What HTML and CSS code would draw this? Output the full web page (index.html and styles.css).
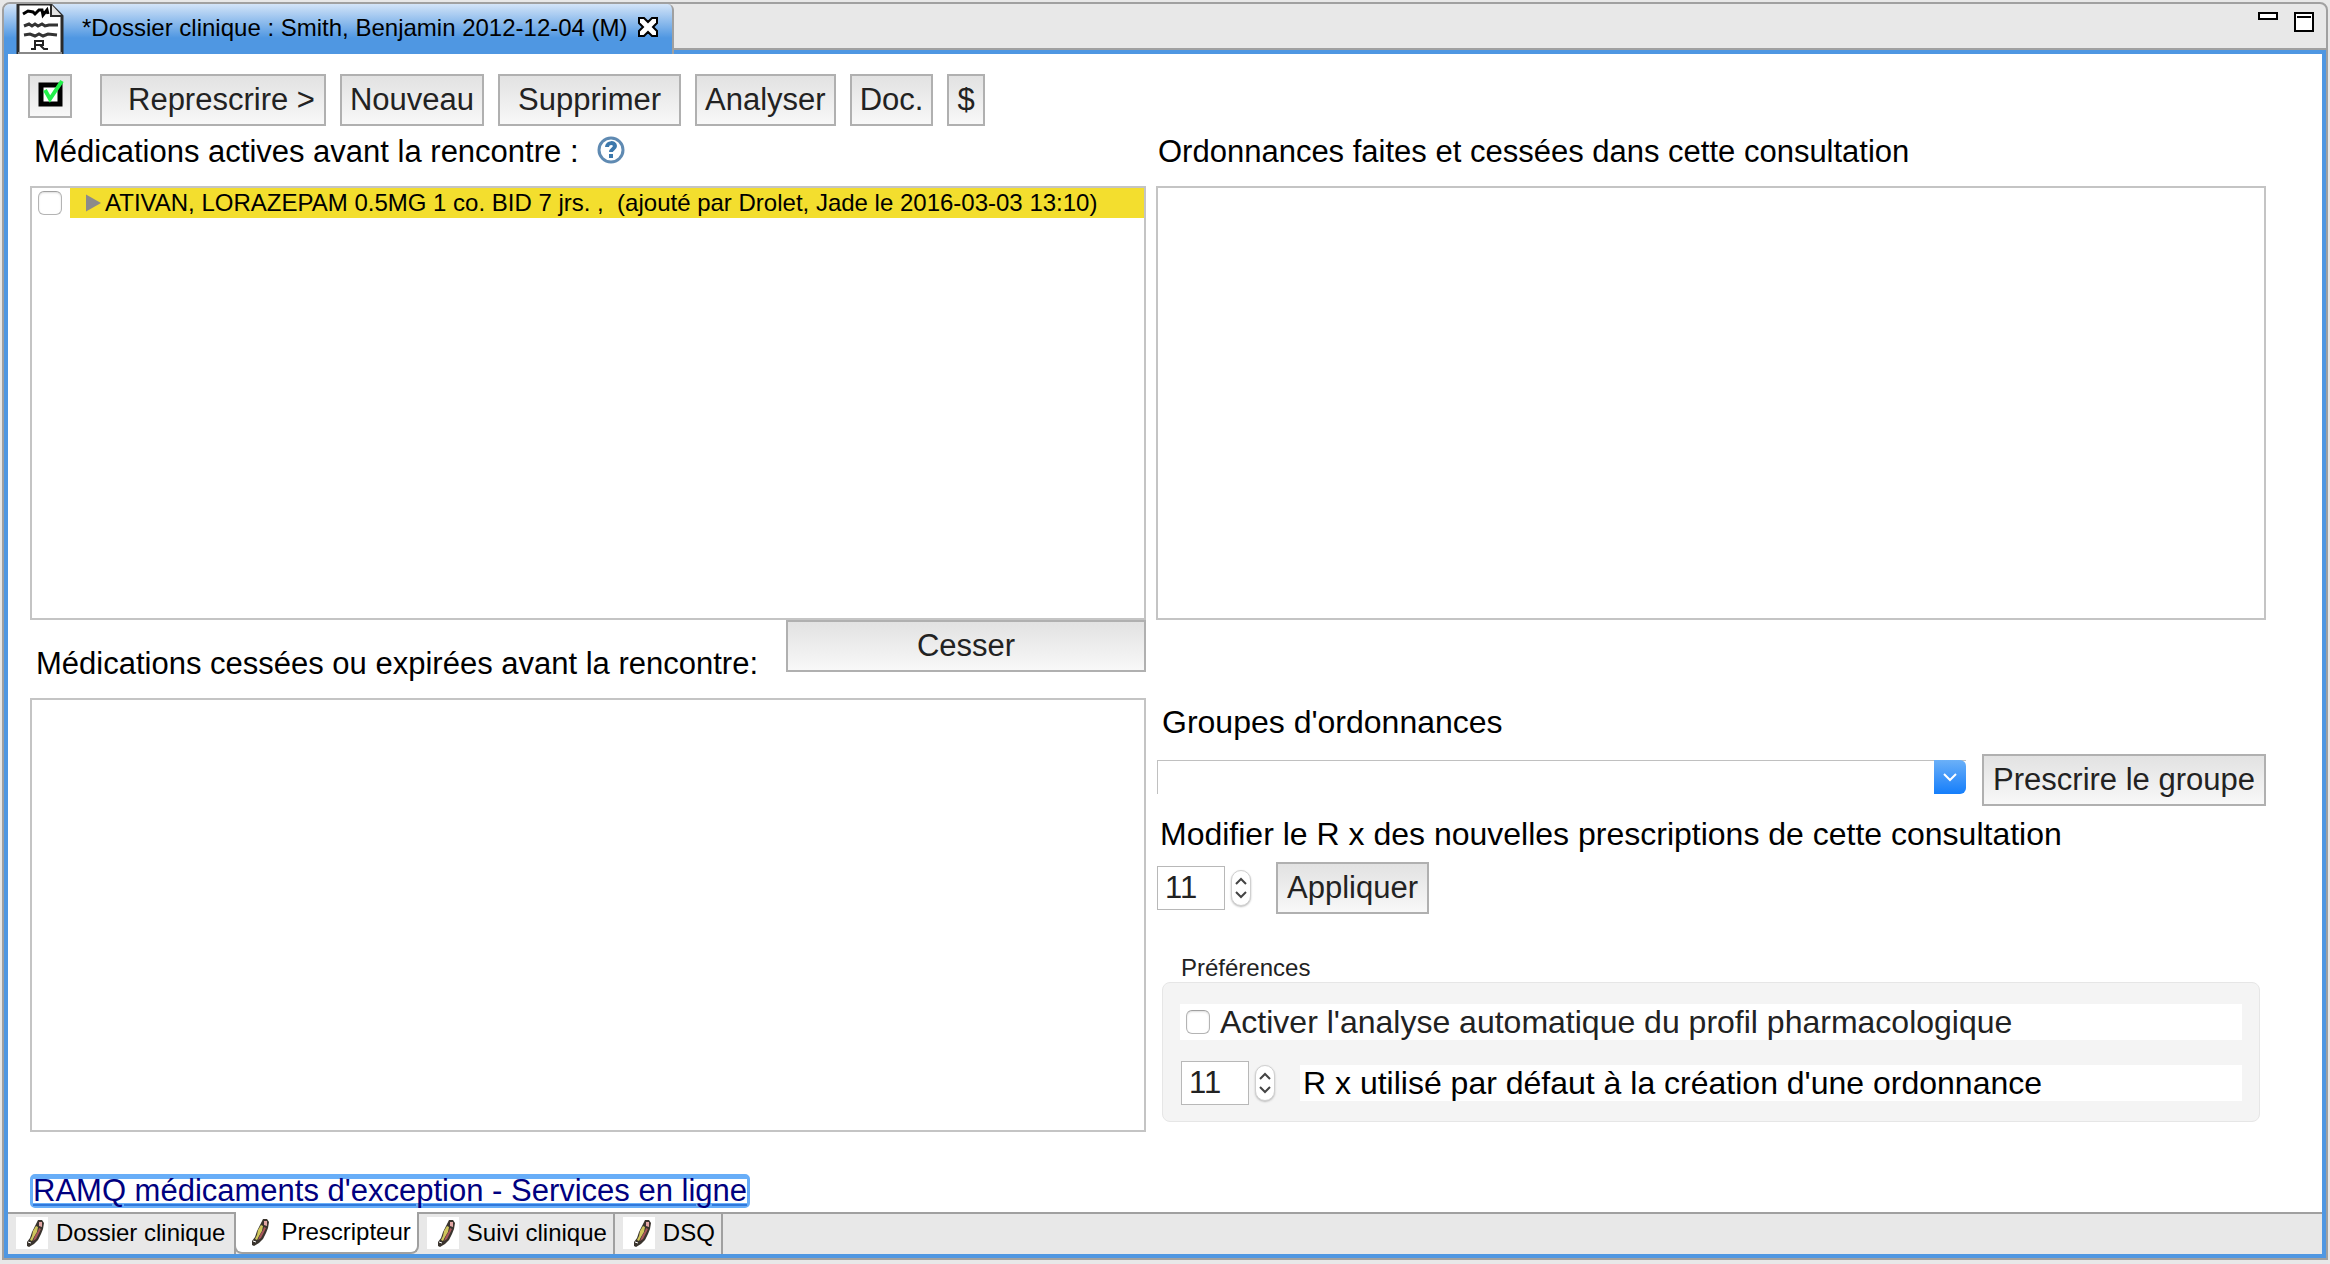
FILE: index.html
```html
<!DOCTYPE html>
<html lang="fr">
<head>
<meta charset="utf-8">
<title>Dossier clinique</title>
<link rel="stylesheet" href="styles.css">
</head>
<body>
<svg class="defs" aria-hidden="true">
  <symbol id="pencil" viewBox="0 0 32 32">
    <rect width="32" height="32" fill="#fff"/>
    <path d="M22 3h4l2 3-1 6-2 5-3 6-4 4-5 3-2-1 0-4 3-4 2-6 3-6z" fill="#3a342e"/>
    <path d="M23 5h3v5l-3-1z" fill="#e2a6a4"/>
    <path d="M20 9l2 1-1 5-3 5-2 4-2-1 2-4 1-5z" fill="#d0c65c"/>
    <path d="M23 11l2 1-3 6-2 4-3 2 2-5 3-5z" fill="#a8565a"/>
    <path d="M12 25l3 1" stroke="#fff" stroke-width="1"/>
  </symbol>
</svg>
<div class="window">
  <header class="titlebar">
    <div class="doc-tab">
      <svg class="doc-icon" viewBox="0 0 48 50" aria-hidden="true">
        <path d="M2 0h32l12 12v38H2z" fill="#fff" stroke="#2a2a2a" stroke-width="3"/>
        <path d="M35 0v12h11" fill="#e4e4e4" stroke="#2a2a2a" stroke-width="2"/>
        <path d="M2 49h44" stroke="#888" stroke-width="2"/>
        <path d="M7 10l5-3 5 1 2 2 4-4 3 0 1 5 4-5 1 4" fill="none" stroke="#000" stroke-width="3"/>
        <path d="M8 22l5-2 3 2 3-2 3 2 4-2 3 2 4-1 9 0" fill="none" stroke="#333" stroke-width="3"/>
        <path d="M8 31l6-1 5 2 4-2 4 2 5-2 9 1" fill="none" stroke="#333" stroke-width="3"/>
        <path d="M15 45h4V37h8v4h-7M24 41l4 4h4" fill="none" stroke="#222" stroke-width="2"/>
      </svg>
      <span>*Dossier clinique : Smith, Benjamin 2012-12-04 (M)</span>
      <button class="plain" aria-label="Fermer">
        <svg width="20" height="20" viewBox="0 0 20 20"><path d="M1 1h5l4 4 4-4h5v5l-4 4 4 4v5h-5l-4-4-4 4H1v-5l4-4-4-4z" fill="#fff" stroke="#000" stroke-width="2"/></svg>
      </button>
    </div>
    <div class="window-controls">
      <button class="plain" aria-label="Réduire"><svg width="20" height="20" viewBox="0 0 20 20"><path d="M1 1h18v6H1z" fill="#fff" stroke="#000" stroke-width="2"/></svg></button>
      <button class="plain" aria-label="Agrandir"><svg width="20" height="20" viewBox="0 0 20 20"><path d="M1 1h18v18H1z" fill="#fff" stroke="#000" stroke-width="2"/><path d="M3 5h14" stroke="#000" stroke-width="2"/></svg></button>
    </div>
  </header>

  <main class="content">
    <div class="toolbar">
      <button class="btn btn-check" aria-label="Tout cocher">
        <svg width="30" height="30" viewBox="0 0 30 30"><rect x="6" y="7" width="19" height="19" fill="#fff" stroke="#000" stroke-width="5"/><path d="M10 12l5 9L27 3" fill="none" stroke="#23f04b" stroke-width="4"/></svg>
      </button>
      <button class="btn btn-renew">Represcrire &gt;</button>
      <button class="btn">Nouveau</button>
      <button class="btn btn-wide">Supprimer</button>
      <button class="btn">Analyser</button>
      <button class="btn">Doc.</button>
      <button class="btn">$</button>
    </div>

    <div class="heading">
      <h2>Médications actives avant la rencontre :</h2>
      <button class="plain help" aria-label="Aide">
        <svg width="28" height="28" viewBox="0 0 28 28"><circle cx="14" cy="14" r="12" fill="#fff" stroke="#5f8ab2" stroke-width="3"/><path d="M10 11c0-5 8-5 8-1 0 3-4 3-4 6" fill="none" stroke="#3c78ac" stroke-width="4"/><path d="M12 18h4v4h-4z" fill="#3c78ac"/></svg>
      </button>
    </div>
    <div class="heading heading-right"><h2>Ordonnances faites et cessées dans cette consultation</h2></div>

    <ul class="list">
      <li>
        <input type="checkbox" class="check" id="med1">
        <label class="entry" for="med1"><svg width="15" height="18" viewBox="0 0 14 16" aria-hidden="true"><path d="M0 0l14 8-14 8z" fill="#8b8b8b"/></svg>ATIVAN, LORAZEPAM 0.5MG 1 co. BID 7 jrs. ,&nbsp; (ajouté par Drolet, Jade le 2016-03-03 13:10)</label>
      </li>
    </ul>
    <div class="list"></div>

    <div class="stop-row">
      <h2>Médications cessées ou expirées avant la rencontre:</h2>
      <button class="btn btn-stop">Cesser</button>
    </div>

    <section class="orders">
      <label class="title" for="group">Groupes d'ordonnances</label>
      <div class="group-row">
        <div class="combo">
          <select id="group"><option></option></select>
          <span class="combo-arrow"><svg width="14" height="10" viewBox="0 0 14 10" aria-hidden="true"><path d="M1 2l6 6 6-6" fill="none" stroke="#fff" stroke-width="2"/></svg></span>
        </div>
        <button class="btn">Prescrire le groupe</button>
      </div>
      <label class="subtitle" for="rx">Modifier le R x des nouvelles prescriptions de cette consultation</label>
      <div class="apply-row">
        <div class="spinner">
          <input type="number" id="rx" value="11">
          <span class="stepper">
            <button class="plain" aria-label="Augmenter"><svg width="12" height="8" viewBox="0 0 12 8"><path d="M1 7l5-5 5 5" fill="none" stroke="#444" stroke-width="2"/></svg></button>
            <button class="plain" aria-label="Diminuer"><svg width="12" height="8" viewBox="0 0 12 8"><path d="M1 1l5 5 5-5" fill="none" stroke="#444" stroke-width="2"/></svg></button>
          </span>
        </div>
        <button class="btn">Appliquer</button>
      </div>
      <h3>Préférences</h3>
      <div class="prefs">
        <div class="pref-check">
          <input type="checkbox" class="check" id="auto">
          <label for="auto">Activer l'analyse automatique du profil pharmacologique</label>
        </div>
        <div class="pref-default">
          <div class="spinner">
            <input type="number" id="rxdef" value="11">
            <span class="stepper">
              <button class="plain" aria-label="Augmenter"><svg width="12" height="8" viewBox="0 0 12 8"><path d="M1 7l5-5 5 5" fill="none" stroke="#444" stroke-width="2"/></svg></button>
              <button class="plain" aria-label="Diminuer"><svg width="12" height="8" viewBox="0 0 12 8"><path d="M1 1l5 5 5-5" fill="none" stroke="#444" stroke-width="2"/></svg></button>
            </span>
          </div>
          <label for="rxdef">R x utilisé par défaut à la création d'une ordonnance</label>
        </div>
      </div>
    </section>
    <div class="list"></div>

    <div class="link-row"><a href="#ramq">RAMQ médicaments d'exception - Services en ligne</a></div>
  </main>

  <nav class="tabs">
    <a href="#dossier"><svg><use href="#pencil"/></svg>Dossier clinique</a>
    <a href="#prescripteur" class="active" aria-current="page"><svg><use href="#pencil"/></svg>Prescripteur</a>
    <a href="#suivi"><svg><use href="#pencil"/></svg>Suivi clinique</a>
    <a href="#dsq"><svg><use href="#pencil"/></svg>DSQ</a>
  </nav>
</div>
</body>
</html>
```
FILE: styles.css
```css
* { box-sizing: border-box; }
body {
  margin: 0;
  padding: 2px 2px 4px;
  min-height: 100vh;
  display: flex;
  background: #e8e8e8;
  color: #000;
  font: 31px/36px "Liberation Sans", Arial, sans-serif;
}
h2, h3 { margin: 0; font-size: inherit; font-weight: normal; }
.defs { position: absolute; width: 0; height: 0; }
svg { display: block; flex: none; }
.plain { border: 0; padding: 0; background: none; display: block; }

.window {
  flex: 1;
  min-width: 0;
  display: flex;
  flex-direction: column;
  border: 2px solid #a0a0a0;
  border-radius: 8px 8px 0 0;
}
.titlebar {
  display: flex;
  justify-content: space-between;
  height: 50px;
  background: linear-gradient(#4f97e2, #4f97e2) bottom / 100% 4px no-repeat,
              linear-gradient(#a0a0a0, #a0a0a0) 0 44px / 100% 2px no-repeat;
}
.doc-tab {
  display: flex;
  align-items: center;
  padding: 0 14px 0 12px;
  border-right: 2px solid #a0a0a0;
  border-radius: 6px 6px 0 0;
  background: linear-gradient(#d3e4f8, #4f97e2 34px);
  font-size: 24px;
}
.doc-icon { width: 48px; height: 50px; margin-right: 18px; }
.doc-tab span { padding-bottom: 2px; }
.doc-tab .plain { margin: 0 0 4px 10px; }
.window-controls { display: flex; align-items: flex-start; gap: 16px; padding: 8px 12px; }

.content {
  flex: 1;
  display: grid;
  grid-template-columns: 1116fr 1110fr;
  grid-template-rows: 72px 60px 1fr 78px 1fr 80px;
  column-gap: 10px;
  padding: 0 56px 0 22px;
  border: solid #4f97e2;
  border-width: 0 4px;
  background: #fff;
}
.toolbar {
  grid-column: 1 / -1;
  display: flex;
  align-items: flex-start;
  gap: 14px;
  padding-top: 20px;
}
.btn {
  height: 52px;
  padding: 0 8px;
  border: 2px solid #b0b0b0;
  background: linear-gradient(#e2e2e2, #f8f8f8);
  color: #222;
  font: inherit;
  line-height: 46px;
  white-space: nowrap;
}
.btn-check { width: 44px; height: 44px; margin: 0 14px 0 -2px; padding: 0 5px 6px; }
.btn-renew { padding: 0 9px 0 26px; }
.btn-wide { padding: 0 18px; }

.heading { display: flex; align-items: flex-start; padding: 8px 4px 0; }
.heading-right { padding-left: 2px; }
.help { margin: 2px 0 0 18px; }

.list { margin: 0; padding: 0; border: 2px solid #c4c4c4; list-style: none; font-size: 24px; }
.list li { display: flex; align-items: center; height: 30px; }
.check {
  appearance: none;
  flex: none;
  width: 24px;
  height: 24px;
  margin: 0 8px 0 6px;
  border: 1px solid #b4b4b4;
  border-top-color: #a0a0a0;
  border-radius: 6px;
  background: #fff;
  box-shadow: inset 0 1px 2px #ddd;
}
.entry { flex: 1; display: flex; align-items: center; gap: 4px; padding-left: 16px; line-height: 30px; background: #f3de2e; white-space: pre; }

.stop-row { display: flex; justify-content: space-between; align-items: flex-start; padding-left: 6px; }
.stop-row h2 { padding-top: 26px; }
.btn-stop { width: 360px; }

.orders { grid-area: 4 / 2 / 6 / 3; display: flex; flex-direction: column; }
.orders label { font-size: 32px; }
.orders .btn { padding: 0 9px; }
.title { padding: 84px 0 0 6px; }
.group-row { display: flex; align-items: flex-start; gap: 16px; padding-top: 14px; }
.combo { position: relative; flex: 1; margin-top: 6px; padding-left: 1px; }
.combo select {
  appearance: none;
  display: block;
  width: 100%;
  height: 34px;
  border: 1px solid #c0c0c0;
  border-width: 1px 0 0 1px;
  background: #fff;
  font: inherit;
}
.combo-arrow {
  position: absolute;
  inset: 0 0 0 auto;
  width: 32px;
  display: grid;
  place-items: center;
  border-radius: 0 6px 6px 0;
  background: linear-gradient(#6bb0f8, #157efb);
  pointer-events: none;
}
.subtitle { padding: 10px 0 0 4px; }
.apply-row { display: flex; align-items: center; gap: 25px; padding-top: 10px; }
.spinner { display: flex; align-items: center; gap: 6px; }
.spinner input {
  appearance: textfield;
  width: 68px;
  height: 44px;
  padding: 0 7px;
  border: 1px solid #b8b8b8;
  background: #fff;
  color: #222;
  font: inherit;
}
.spinner input::-webkit-inner-spin-button { appearance: none; margin: 0; }
.apply-row .spinner { padding-left: 1px; }
.stepper {
  width: 20px;
  height: 36px;
  display: flex;
  flex-direction: column;
  align-items: center;
  justify-content: space-evenly;
  border: 1px solid #d0d0d0;
  border-radius: 10px;
  background: #fff;
  box-shadow: 0 1px 2px #bbb;
}
.orders h3 { padding: 40px 0 0 25px; font-size: 24px; line-height: 28px; color: #222; }
.prefs {
  display: flex;
  flex-direction: column;
  gap: 21px;
  margin: 0 6px;
  padding: 21px 17px 16px;
  border: 1px solid #e6e6e6;
  border-radius: 8px;
  background: #f4f4f4;
}
.pref-check { display: flex; align-items: center; background: #fff; color: #222; }
.pref-default { display: flex; align-items: center; gap: 25px; padding-left: 1px; }
.pref-default label { flex: 1; padding-left: 3px; background: #fff; }
.pref-check .check { margin-right: 10px; }

.link-row { grid-column: 1 / -1; display: flex; align-items: flex-end; padding-bottom: 4px; }
.link-row a {
  border: solid #68aef8;
  border-width: 5px 3px;
  border-radius: 5px;
  line-height: 24px;
  color: #000080;
  text-decoration: underline 2px #2f78dc;
  text-underline-offset: 3px;
}

.tabs {
  display: flex;
  height: 46px;
  border: solid #4f97e2;
  border-width: 0 4px 4px;
  background: linear-gradient(#a0a0a0, #a0a0a0) top / 100% 2px no-repeat #e8e8e8;
  font-size: 24px;
}
.tabs a {
  display: flex;
  align-items: center;
  gap: 8px;
  padding: 0 6px 0 8px;
  border-right: 2px solid #a0a0a0;
  color: #000;
  text-decoration: none;
}
.tabs svg { width: 32px; height: 32px; }
.tabs a:first-child { padding-right: 9px; }
.tabs .active {
  margin-left: -2px;
  padding-left: 5px;
  border: solid #a0a0a0;
  border-width: 0 2px 2px;
  border-radius: 0 0 8px 8px;
  background: #fff;
}
```
